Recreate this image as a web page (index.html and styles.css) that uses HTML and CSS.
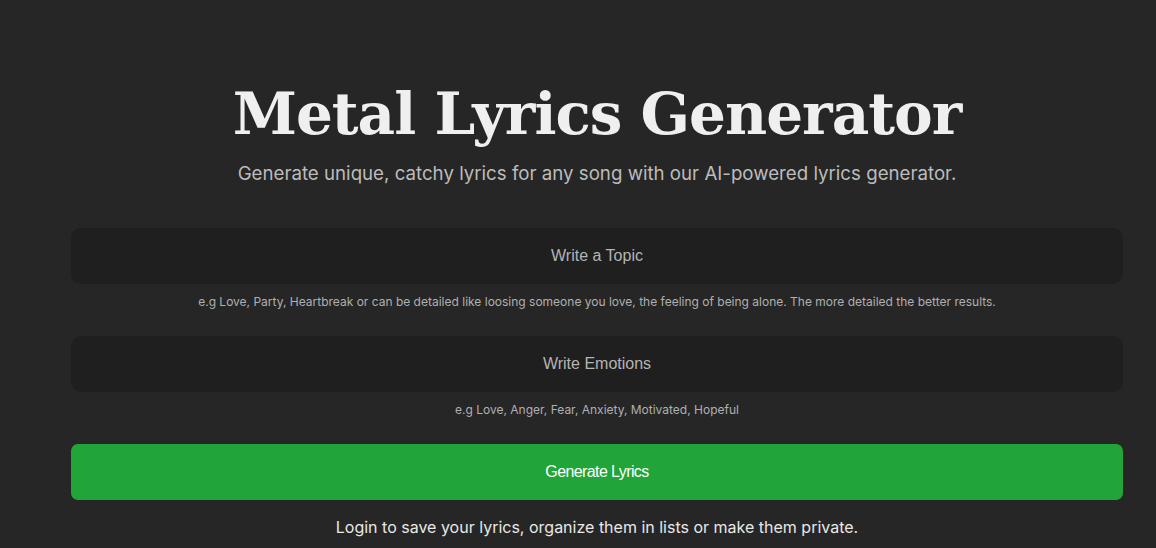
FILE: index.html
```html
<!DOCTYPE html>
<html>
<head>
<meta charset="utf-8">
<link rel="stylesheet" href="styles.css">
</head>
<body>
<main class="page">
  <h1 class="title">Metal Lyrics Generator</h1>
  <p class="subtitle">Generate unique, catchy lyrics for any song with our AI-powered lyrics generator.</p>
  <form class="form">
    <input class="field" type="text" placeholder="Write a Topic">
    <p class="hint">e.g Love, Party, Heartbreak or can be detailed like loosing someone you love, the feeling of being alone. The more detailed the better results.</p>
    <input class="field" type="text" placeholder="Write Emotions">
    <p class="hint">e.g Love, Anger, Fear, Anxiety, Motivated, Hopeful</p>
    <button class="btn" type="button">Generate Lyrics</button>
  </form>
  <p class="login">Login to save your lyrics, organize them in lists or make them private.</p>
</main>
</body>
</html>
```
FILE: styles.css
```css
html, body {
  margin: 0;
  padding: 0;
  background: #262626;
}
body {
  font-family: Inter, "Liberation Sans", sans-serif;
  color: #e5e5e5;
  height: 548px;
  overflow: hidden;
}
.page {
  width: 1052px;
  margin-left: 71px;
  padding-top: 78px;
  display: flex;
  flex-direction: column;
  align-items: stretch;
}
.title {
  margin: 0;
  text-align: center;
  font-family: "DejaVu Serif", serif;
  font-weight: 700;
  font-size: 58px;
  line-height: 72px;
  color: #efefef;
  letter-spacing: -1px;
}
.subtitle {
  margin: 10px 0 0;
  text-align: center;
  font-size: 18.7px;
  line-height: 28px;
  color: #bcbcbc;
}
.form {
  margin-top: 40px;
  display: flex;
  flex-direction: column;
}
.field {
  height: 56px;
  box-sizing: border-box;
  border: none;
  border-radius: 10px;
  background: #1f1f1f;
  text-align: center;
  font-family: "Liberation Sans", Arial, sans-serif;
  font-size: 16px;
  color: #ddd;
  outline: none;
}
.field::placeholder {
  color: #b4b4b4;
}
.hint {
  margin: 10px 0 26px;
  text-align: center;
  font-size: 12px;
  line-height: 16px;
  color: #b0b0b0;
}
.btn {
  height: 56px;
  border: none;
  border-radius: 7px;
  background: #21a438;
  color: #fff;
  font-family: "Liberation Sans", Arial, sans-serif;
  font-size: 16px;
  letter-spacing: -0.6px;
}
.login {
  margin: 15px 0 0;
  text-align: center;
  font-size: 16px;
  line-height: 24px;
  color: #e8e8e8;
}
```
